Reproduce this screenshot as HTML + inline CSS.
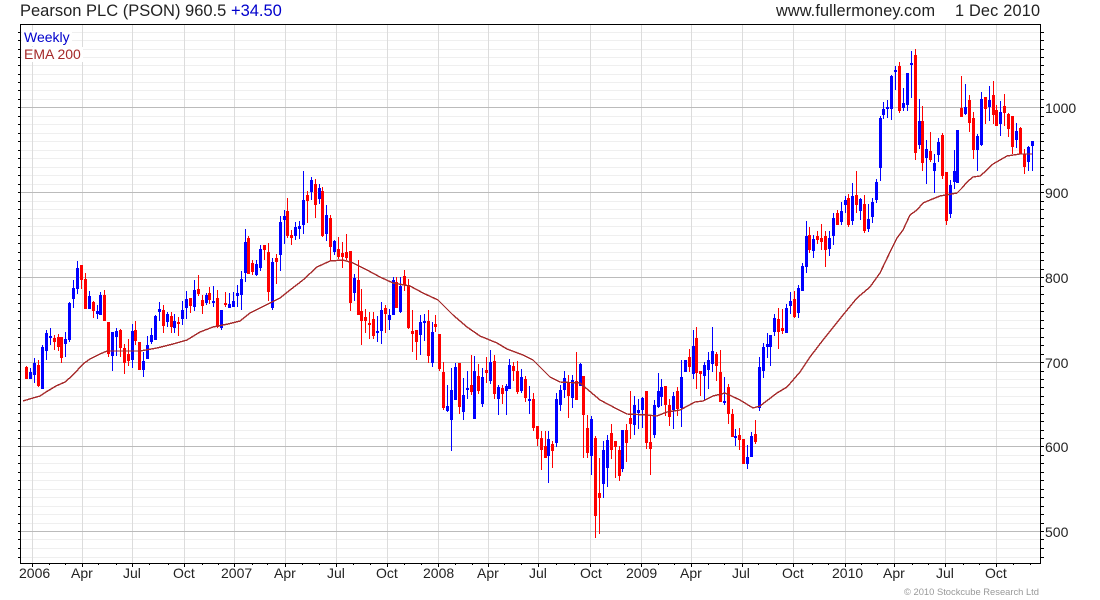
<!DOCTYPE html>
<html lang="en">
<head>
<meta charset="utf-8">
<title>Pearson PLC (PSON)</title>
<style>
html,body{margin:0;padding:0;background:#fff;width:1100px;height:600px;overflow:hidden}
svg{display:block}
text{font-family:"Liberation Sans",Arial,sans-serif}
</style>
</head>
<body>
<svg xmlns="http://www.w3.org/2000/svg" width="1100" height="600" viewBox="0 0 1100 600">
<rect width="1100" height="600" fill="#fff"/>
<g shape-rendering="crispEdges" fill="none">
<path stroke="#efefef" stroke-width="1" d="M21 32.5H1040M21 40.5H1040M21 49.5H1040M21 57.5H1040M21 65.5H1040M21 74.5H1040M21 82.5H1040M21 90.5H1040M21 99.5H1040M21 116.5H1040M21 124.5H1040M21 133.5H1040M21 141.5H1040M21 150.5H1040M21 158.5H1040M21 167.5H1040M21 175.5H1040M21 184.5H1040M21 201.5H1040M21 209.5H1040M21 218.5H1040M21 226.5H1040M21 235.5H1040M21 243.5H1040M21 252.5H1040M21 260.5H1040M21 269.5H1040M21 286.5H1040M21 294.5H1040M21 303.5H1040M21 311.5H1040M21 320.5H1040M21 328.5H1040M21 337.5H1040M21 345.5H1040M21 354.5H1040M21 371.5H1040M21 379.5H1040M21 387.5H1040M21 396.5H1040M21 404.5H1040M21 413.5H1040M21 421.5H1040M21 430.5H1040M21 438.5H1040M21 455.5H1040M21 463.5H1040M21 472.5H1040M21 480.5H1040M21 489.5H1040M21 497.5H1040M21 506.5H1040M21 514.5H1040M21 523.5H1040M21 539.5H1040M21 548.5H1040M21 557.5H1040"/>
<path stroke="#dcdcdc" stroke-width="1" d="M32.5 25V563M82.5 25V563M132.5 25V563M184.5 25V563M234.5 25V563M285.5 25V563M336.5 25V563M387.5 25V563M438.5 25V563M488.5 25V563M538.5 25V563M590.5 25V563M641.5 25V563M691.5 25V563M742.5 25V563M793.5 25V563M845.5 25V563M894.5 25V563M945.5 25V563M996.5 25V563"/>
<path stroke="#bbbbbb" stroke-width="1" d="M21 107.5H1040M21 192.5H1040M21 277.5H1040M21 362.5H1040M21 446.5H1040M21 531.5H1040"/>
</g>
<rect x="22" y="31" width="50" height="15" fill="#fff"/>
<rect x="22" y="47" width="61" height="15" fill="#fff"/>
<g shape-rendering="crispEdges" fill="none">
<!-- blue wicks -->
<path stroke="#0000ff" stroke-width="1" d="M30.5 368V379M34.5 358V383M42.5 345V389M46.5 330V360M50.5 328V345M65.5 332V357M69.5 302V342M73.5 280V308M77.5 261V294M89.5 291V309M97.5 305V319M100.5 292V315M112.5 332V371M116.5 328V356M132.5 324V368M143.5 352V377M147.5 336V359M151.5 328V344M155.5 315V340M159.5 302V321M167.5 312V327M174.5 314V333M182.5 301V325M186.5 291V319M194.5 280V311M206.5 293V305M213.5 286V307M221.5 310V330M229.5 293V308M233.5 292V307M237.5 285V307M241.5 271V310M245.5 229V282M256.5 260V276M260.5 245V271M272.5 258V310M280.5 216V271M284.5 210V244M295.5 222V240M299.5 221V239M303.5 171V234M311.5 177V200M319.5 184V204M326.5 205V241M334.5 240V255M354.5 274V301M377.5 316V342M381.5 302V344M389.5 309V330M393.5 277V315M400.5 277V313M420.5 315V355M424.5 314V341M432.5 322V367M447.5 385V412M451.5 368V451M455.5 363V400M463.5 378V420M467.5 371V399M474.5 356V419M482.5 368V407M490.5 350V384M498.5 385V415M506.5 384V415M509.5 359V389M521.5 369V393M529.5 386V414M548.5 431V483M556.5 393V447M560.5 385V411M564.5 371V398M572.5 375V408M580.5 363V386M591.5 416V475M603.5 441V498M607.5 435V487M622.5 430V472M634.5 396V435M638.5 399V429M642.5 397V428M654.5 400V438M658.5 373V408M661.5 379V406M673.5 392V429M681.5 360V427M685.5 360V372M693.5 330V379M704.5 362V400M708.5 352V389M712.5 327V372M724.5 377V405M735.5 429V446M747.5 445V469M751.5 432V457M759.5 357V411M763.5 343V378M767.5 333V358M770.5 335V366M774.5 314V336M786.5 304V333M790.5 292V314M798.5 285V318M802.5 263V291M806.5 221V273M813.5 235V258M829.5 231V256M833.5 213V245M841.5 202V225M845.5 196V213M852.5 183V225M860.5 198V220M868.5 204V232M872.5 198V223M876.5 179V203M880.5 116V181M883.5 102V119M887.5 100V118M891.5 75V120M895.5 66V90M903.5 88V111M907.5 73V111M911.5 51V98M919.5 99V149M926.5 140V184M934.5 154V193M938.5 138V162M950.5 180V218M954.5 150V189M957.5 130V183M965.5 84V115M977.5 134V171M981.5 92V146M989.5 86V121M1000.5 101V136M1016.5 123V148M1028.5 146V171M1032.5 141V171"/>
<!-- blue bodies -->
<path stroke="#0000ff" stroke-width="3" d="M30.5 372V379M34.5 363V375M42.5 347V389M46.5 333V351M50.5 336V338M65.5 339V344M69.5 303V340M73.5 288V299M77.5 268V289M89.5 296V309M97.5 311V314M100.5 295V315M112.5 332V356M116.5 331V337M132.5 331V360M143.5 361V370M147.5 345V359M151.5 335V342M155.5 316V340M159.5 309V312M167.5 314V322M174.5 321V328M182.5 310V319M186.5 299V308M194.5 290V307M206.5 295V303M213.5 301V303M221.5 310V328M229.5 304V308M233.5 301V307M237.5 293V296M241.5 279V295M245.5 242V273M256.5 264V275M260.5 249V268M272.5 262V308M280.5 222V255M284.5 216V220M295.5 227V236M299.5 226V229M303.5 200V225M311.5 180V192M319.5 188V199M326.5 215V234M334.5 241V252M354.5 278V293M377.5 331V333M381.5 310V331M389.5 315V320M393.5 280V315M400.5 286V312M420.5 322V335M424.5 321V323M432.5 332V363M447.5 406V411M451.5 390V420M455.5 367V400M463.5 395V412M467.5 388V390M474.5 371V419M482.5 377V404M490.5 362V381M498.5 387V399M506.5 386V391M509.5 365V389M521.5 377V391M529.5 399V401M548.5 439V456M556.5 399V443M560.5 390V405M564.5 378V390M572.5 380V398M580.5 364V386M591.5 419V456M603.5 450V484M607.5 440V468M622.5 430V469M634.5 405V425M638.5 410V413M642.5 398V410M654.5 405V435M658.5 391V407M661.5 387V397M673.5 396V410M681.5 377V408M685.5 360V372M693.5 346V374M704.5 365V376M708.5 360V370M712.5 351V364M724.5 401V403M735.5 436V438M747.5 457V464M751.5 436V457M759.5 367V408M763.5 347V371M767.5 344V347M770.5 335V347M774.5 318V332M786.5 308V333M790.5 301V306M798.5 288V313M802.5 266V291M806.5 236V267M813.5 239V251M829.5 238V249M833.5 218V236M841.5 211V222M845.5 200V205M852.5 196V221M860.5 199V211M868.5 219V229M872.5 202V217M876.5 182V200M880.5 118V168M883.5 109V115M887.5 107V109M891.5 76V109M895.5 70V72M903.5 103V108M907.5 73V105M911.5 63V65M919.5 121V145M926.5 149V158M934.5 163V171M938.5 142V155M950.5 185V214M954.5 171V182M957.5 130V183M965.5 107V114M977.5 136V150M981.5 99V145M989.5 100V107M1000.5 112V124M1016.5 131V140M1028.5 147V162M1032.5 141V146"/>
<!-- red wicks -->
<path stroke="#ff0000" stroke-width="1" d="M26.5 366V379M38.5 360V387M54.5 335V350M58.5 334V351M61.5 337V363M81.5 265V289M85.5 273V309M93.5 301V318M104.5 290V321M108.5 322V357M120.5 329V357M124.5 344V374M128.5 339V366M135.5 321V345M139.5 342V370M163.5 305V333M171.5 312V333M178.5 317V336M190.5 298V313M198.5 275V296M202.5 295V314M209.5 287V304M217.5 290V328M225.5 292V307M248.5 236V274M252.5 260V275M264.5 245V260M268.5 243V301M276.5 254V284M287.5 198V238M291.5 230V245M307.5 191V223M315.5 179V218M322.5 187V237M330.5 215V261M338.5 237V259M342.5 242V268M346.5 234V260M350.5 251V311M358.5 260V315M361.5 289V345M365.5 309V333M369.5 312V339M373.5 312V339M385.5 305V333M396.5 277V308M404.5 270V291M408.5 279V329M412.5 310V352M416.5 330V360M428.5 310V363M435.5 315V332M439.5 334V371M443.5 362V410M459.5 363V414M471.5 355V395M478.5 364V394M486.5 357V383M494.5 355V399M502.5 385V404M513.5 362V381M517.5 361V394M525.5 376V402M533.5 393V431M537.5 426V446M541.5 431V470M545.5 431V458M552.5 441V468M568.5 375V418M576.5 352V400M583.5 376V458M587.5 415V458M595.5 436V538M599.5 458V534M611.5 424V459M615.5 441V478M619.5 446V481M626.5 424V462M630.5 391V439M646.5 391V449M650.5 415V475M665.5 386V416M669.5 399V426M677.5 387V416M689.5 349V372M696.5 327V389M700.5 371V396M716.5 352V381M720.5 350V402M728.5 384V424M732.5 409V437M739.5 428V450M743.5 439V464M755.5 420V444M778.5 308V349M782.5 309V334M794.5 291V318M809.5 227V253M817.5 231V244M821.5 224V250M825.5 231V267M837.5 210V225M848.5 194V227M856.5 171V213M864.5 195V233M899.5 62V113M915.5 49V160M922.5 106V171M930.5 132V162M942.5 133V179M946.5 172V225M961.5 76V117M969.5 95V132M973.5 112V159M985.5 97V124M993.5 81V124M996.5 105V126M1004.5 94V126M1008.5 113V137M1012.5 116V154M1020.5 127V154M1024.5 149V174"/>
<!-- red bodies -->
<path stroke="#ff0000" stroke-width="3" d="M26.5 367V379M38.5 365V386M54.5 338V342M58.5 337V347M61.5 337V358M81.5 265V280M85.5 279V309M93.5 302V311M104.5 295V321M108.5 322V354M120.5 330V348M124.5 348V363M128.5 354V361M135.5 330V341M139.5 342V370M163.5 310V326M171.5 316V327M178.5 322V324M190.5 298V306M198.5 289V294M202.5 300V306M209.5 293V300M217.5 298V327M225.5 303V305M248.5 238V274M252.5 263V272M264.5 245V250M268.5 252V292M276.5 258V262M287.5 211V236M291.5 235V238M307.5 195V201M315.5 184V205M322.5 191V236M330.5 218V247M338.5 249V257M342.5 253V257M346.5 252V258M350.5 251V303M358.5 280V315M361.5 311V321M365.5 317V321M369.5 323V325M373.5 319V336M385.5 308V314M396.5 282V308M404.5 276V285M408.5 285V328M412.5 331V334M416.5 330V342M428.5 321V356M435.5 324V327M439.5 334V369M443.5 372V408M459.5 363V407M471.5 385V392M478.5 376V391M486.5 370V373M494.5 361V394M502.5 388V394M513.5 366V371M517.5 371V392M525.5 379V398M533.5 399V428M537.5 426V439M541.5 438V450M545.5 446V458M552.5 444V451M568.5 383V396M576.5 381V400M583.5 376V415M587.5 428V453M595.5 438V516M599.5 493V498M611.5 433V450M615.5 441V447M619.5 450V476M626.5 430V443M630.5 418V424M646.5 391V443M650.5 442V449M665.5 386V405M669.5 405V417M677.5 391V409M689.5 357V367M696.5 338V373M700.5 371V374M716.5 354V366M720.5 372V402M728.5 387V414M732.5 414V437M739.5 435V440M743.5 439V464M755.5 434V442M778.5 319V332M782.5 328V331M794.5 299V317M809.5 235V250M817.5 236V240M821.5 238V242M825.5 236V250M837.5 213V225M848.5 198V225M856.5 195V205M864.5 204V231M899.5 66V111M915.5 55V153M922.5 121V163M930.5 151V160M942.5 135V176M946.5 172V221M961.5 108V117M969.5 100V123M973.5 118V150M985.5 97V109M993.5 95V115M996.5 110V126M1004.5 106V113M1008.5 114V129M1012.5 116V147M1020.5 128V154M1024.5 154V167"/>
<!-- EMA -->
<polyline fill="none" stroke="#a52a2a" stroke-width="1.4" points="23,401 33,398 40,396 46,392 56,386 65,382 73,375 83,364 90,359 100,354 107,351 124,351 140,351 157,348 173,344 187,340 200,332 213,327 228,324 240,321 250,313 262,307 280,298 290,290 303,280 317,267 330,261 343,260 353,263 367,270 380,277 393,283 410,286 423,293 438,300 453,315 467,327 480,336 497,343 507,349 523,355 533,360 550,377 560,382 580,383 600,400 617,409 627,414 647,415 657,416 667,412 680,410 695,402 703,401 713,396 725,393 740,400 753,408 760,406 777,393 787,387 800,372 810,357 823,340 843,315 857,298 870,287 880,273 891,250 897,238 903,230 910,215 917,210 923,203 930,200 940,196 957,193 962,188 967,182 973,177 980,176 987,170 993,164 1007,156 1020,154 1032,154"/>
<!-- frame -->
<path stroke="#000" stroke-width="1" d="M20.5 24.5H1040.5V563.5H20.5Z"/>
<path stroke="#000" stroke-width="1" d="M18 32.5H20M18 40.5H20M18 49.5H20M18 57.5H20M18 65.5H20M18 74.5H20M18 82.5H20M18 90.5H20M18 99.5H20M18 107.5H20M18 116.5H20M18 124.5H20M18 133.5H20M18 141.5H20M18 150.5H20M18 158.5H20M18 167.5H20M18 175.5H20M18 184.5H20M18 192.5H20M18 201.5H20M18 209.5H20M18 218.5H20M18 226.5H20M18 235.5H20M18 243.5H20M18 252.5H20M18 260.5H20M18 269.5H20M18 277.5H20M18 286.5H20M18 294.5H20M18 303.5H20M18 311.5H20M18 320.5H20M18 328.5H20M18 337.5H20M18 345.5H20M18 354.5H20M18 362.5H20M18 371.5H20M18 379.5H20M18 387.5H20M18 396.5H20M18 404.5H20M18 413.5H20M18 421.5H20M18 430.5H20M18 438.5H20M18 446.5H20M18 455.5H20M18 463.5H20M18 472.5H20M18 480.5H20M18 489.5H20M18 497.5H20M18 506.5H20M18 514.5H20M18 523.5H20M18 531.5H20M18 539.5H20M18 548.5H20M18 557.5H20"/>
<path stroke="#000" stroke-width="1" d="M1041 32.5H1044M1041 40.5H1044M1041 49.5H1044M1041 57.5H1044M1041 65.5H1044M1041 74.5H1044M1041 82.5H1044M1041 90.5H1044M1041 99.5H1044M1041 107.5H1044M1041 116.5H1044M1041 124.5H1044M1041 133.5H1044M1041 141.5H1044M1041 150.5H1044M1041 158.5H1044M1041 167.5H1044M1041 175.5H1044M1041 184.5H1044M1041 192.5H1044M1041 201.5H1044M1041 209.5H1044M1041 218.5H1044M1041 226.5H1044M1041 235.5H1044M1041 243.5H1044M1041 252.5H1044M1041 260.5H1044M1041 269.5H1044M1041 277.5H1044M1041 286.5H1044M1041 294.5H1044M1041 303.5H1044M1041 311.5H1044M1041 320.5H1044M1041 328.5H1044M1041 337.5H1044M1041 345.5H1044M1041 354.5H1044M1041 362.5H1044M1041 371.5H1044M1041 379.5H1044M1041 387.5H1044M1041 396.5H1044M1041 404.5H1044M1041 413.5H1044M1041 421.5H1044M1041 430.5H1044M1041 438.5H1044M1041 446.5H1044M1041 455.5H1044M1041 463.5H1044M1041 472.5H1044M1041 480.5H1044M1041 489.5H1044M1041 497.5H1044M1041 506.5H1044M1041 514.5H1044M1041 523.5H1044M1041 531.5H1044M1041 539.5H1044M1041 548.5H1044M1041 557.5H1044"/>
<path stroke="#000" stroke-width="1" d="M32.5 564V567M49.5 564V565M65.5 564V565M82.5 564V567M98.5 564V565M116.5 564V565M132.5 564V567M149.5 564V565M168.5 564V565M184.5 564V567M202.5 564V565M218.5 564V565M234.5 564V567M252.5 564V565M267.5 564V565M285.5 564V567M302.5 564V565M319.5 564V565M336.5 564V567M353.5 564V565M370.5 564V565M387.5 564V567M404.5 564V565M421.5 564V565M438.5 564V567M455.5 564V565M472.5 564V565M488.5 564V567M504.5 564V565M521.5 564V565M538.5 564V567M556.5 564V565M574.5 564V565M590.5 564V567M607.5 564V565M624.5 564V565M641.5 564V567M658.5 564V565M674.5 564V565M691.5 564V567M708.5 564V565M724.5 564V565M742.5 564V567M758.5 564V565M776.5 564V565M793.5 564V567M812.5 564V565M828.5 564V565M845.5 564V567M861.5 564V565M877.5 564V565M894.5 564V567M912.5 564V565M928.5 564V565M945.5 564V567M963.5 564V565M979.5 564V565M996.5 564V567M1013.5 564V565M1030.5 564V565"/>
</g>
<!-- header -->
<text x="20" y="16" font-size="16.5" fill="#222">Pearson PLC (PSON) 960.5 <tspan fill="#0000cc">+34.50</tspan></text>
<text x="776" y="16" font-size="16.3" fill="#222" textLength="159" lengthAdjust="spacing">www.fullermoney.com</text>
<text x="955" y="16" font-size="16.3" fill="#222" textLength="85" lengthAdjust="spacing">1 Dec 2010</text>
<text x="24" y="42" font-size="14" fill="#0000cc">Weekly</text>
<text x="24" y="59" font-size="14" fill="#a52a2a">EMA 200</text>
<!-- y axis -->
<g font-size="14" fill="#222">
<text x="1045" y="113">1000</text>
<text x="1045" y="198">900</text>
<text x="1045" y="283">800</text>
<text x="1045" y="368">700</text>
<text x="1045" y="452">600</text>
<text x="1045" y="537">500</text>
<!-- x axis -->
<text x="19" y="578">2006</text>
<text x="71" y="578">Apr</text>
<text x="123" y="578">Jul</text>
<text x="173" y="578">Oct</text>
<text x="221" y="578">2007</text>
<text x="274" y="578">Apr</text>
<text x="327" y="578">Jul</text>
<text x="376" y="578">Oct</text>
<text x="423" y="578">2008</text>
<text x="477" y="578">Apr</text>
<text x="529" y="578">Jul</text>
<text x="580" y="578">Oct</text>
<text x="626" y="578">2009</text>
<text x="680" y="578">Apr</text>
<text x="732" y="578">Jul</text>
<text x="782" y="578">Oct</text>
<text x="832" y="578">2010</text>
<text x="883" y="578">Apr</text>
<text x="936" y="578">Jul</text>
<text x="985" y="578">Oct</text>
</g>
<text x="904" y="595" font-size="9.4" fill="#999" textLength="135" lengthAdjust="spacing">© 2010 Stockcube Research Ltd</text>
</svg>
</body>
</html>
